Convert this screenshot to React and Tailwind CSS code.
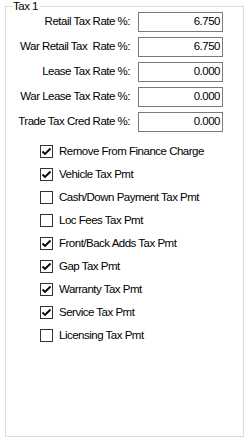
import React from "react";

const rates = [
  ["Retail Tax Rate %:", "6.750"],
  ["War Retail Tax  Rate %:", "6.750"],
  ["Lease Tax Rate %:", "0.000"],
  ["War Lease Tax Rate %:", "0.000"],
  ["Trade Tax Cred Rate %:", "0.000"],
];

const checks = [
  ["Remove From Finance Charge", true],
  ["Vehicle Tax Pmt", true],
  ["Cash/Down Payment Tax Pmt", false],
  ["Loc Fees Tax Pmt", false],
  ["Front/Back Adds Tax Pmt", true],
  ["Gap Tax Pmt", true],
  ["Warranty Tax Pmt", true],
  ["Service Tax Pmt", true],
  ["Licensing Tax Pmt", false],
];

function Box({ checked }) {
  return (
    <div className="w-[13px] h-[13px] border border-[#333333] bg-white flex items-center justify-center shrink-0">
      {checked && (
        <svg width="11" height="11" viewBox="0 0 11 11">
          <path d="M1.5 5.5 L4 8 L9.5 2.5" fill="none" stroke="#000" strokeWidth="1.8" />
        </svg>
      )}
    </div>
  );
}

export default function App() {
  return (
    <div
      className="w-[246px] h-[443px] bg-white text-black text-[11.5px] tracking-[-0.5px] leading-none"
      style={{ fontFamily: '"Liberation Sans", Arial, sans-serif' }}
    >
      <div className="pt-[6px] pl-[5px]">
        <div className="relative w-[239px] h-[431px] border border-[#dcdcdc]">
          <span className="absolute top-[-6px] left-[6px] bg-white pl-[1px] pr-[2px] leading-none">
            Tax 1
          </span>
          <div className="flex flex-col gap-[5px] pt-[5px]">
            {rates.map(([label, val]) => (
              <div key={label} className="flex items-center h-[20px]">
                <div className="w-[124px] text-right whitespace-pre">{label}</div>
                <div className="ml-[8px] w-[85px] h-[20px] border border-[#7a7a7a] flex items-center justify-end pr-[2px]">
                  {val}
                </div>
              </div>
            ))}
          </div>
          <div className="flex flex-col pt-[8px]">
            {checks.map(([label, c]) => (
              <div key={label} className="flex items-center h-[23px] pl-[34px]">
                <Box checked={c} />
                <span className="ml-[6px]">{label}</span>
              </div>
            ))}
          </div>
        </div>
      </div>
    </div>
  );
}
